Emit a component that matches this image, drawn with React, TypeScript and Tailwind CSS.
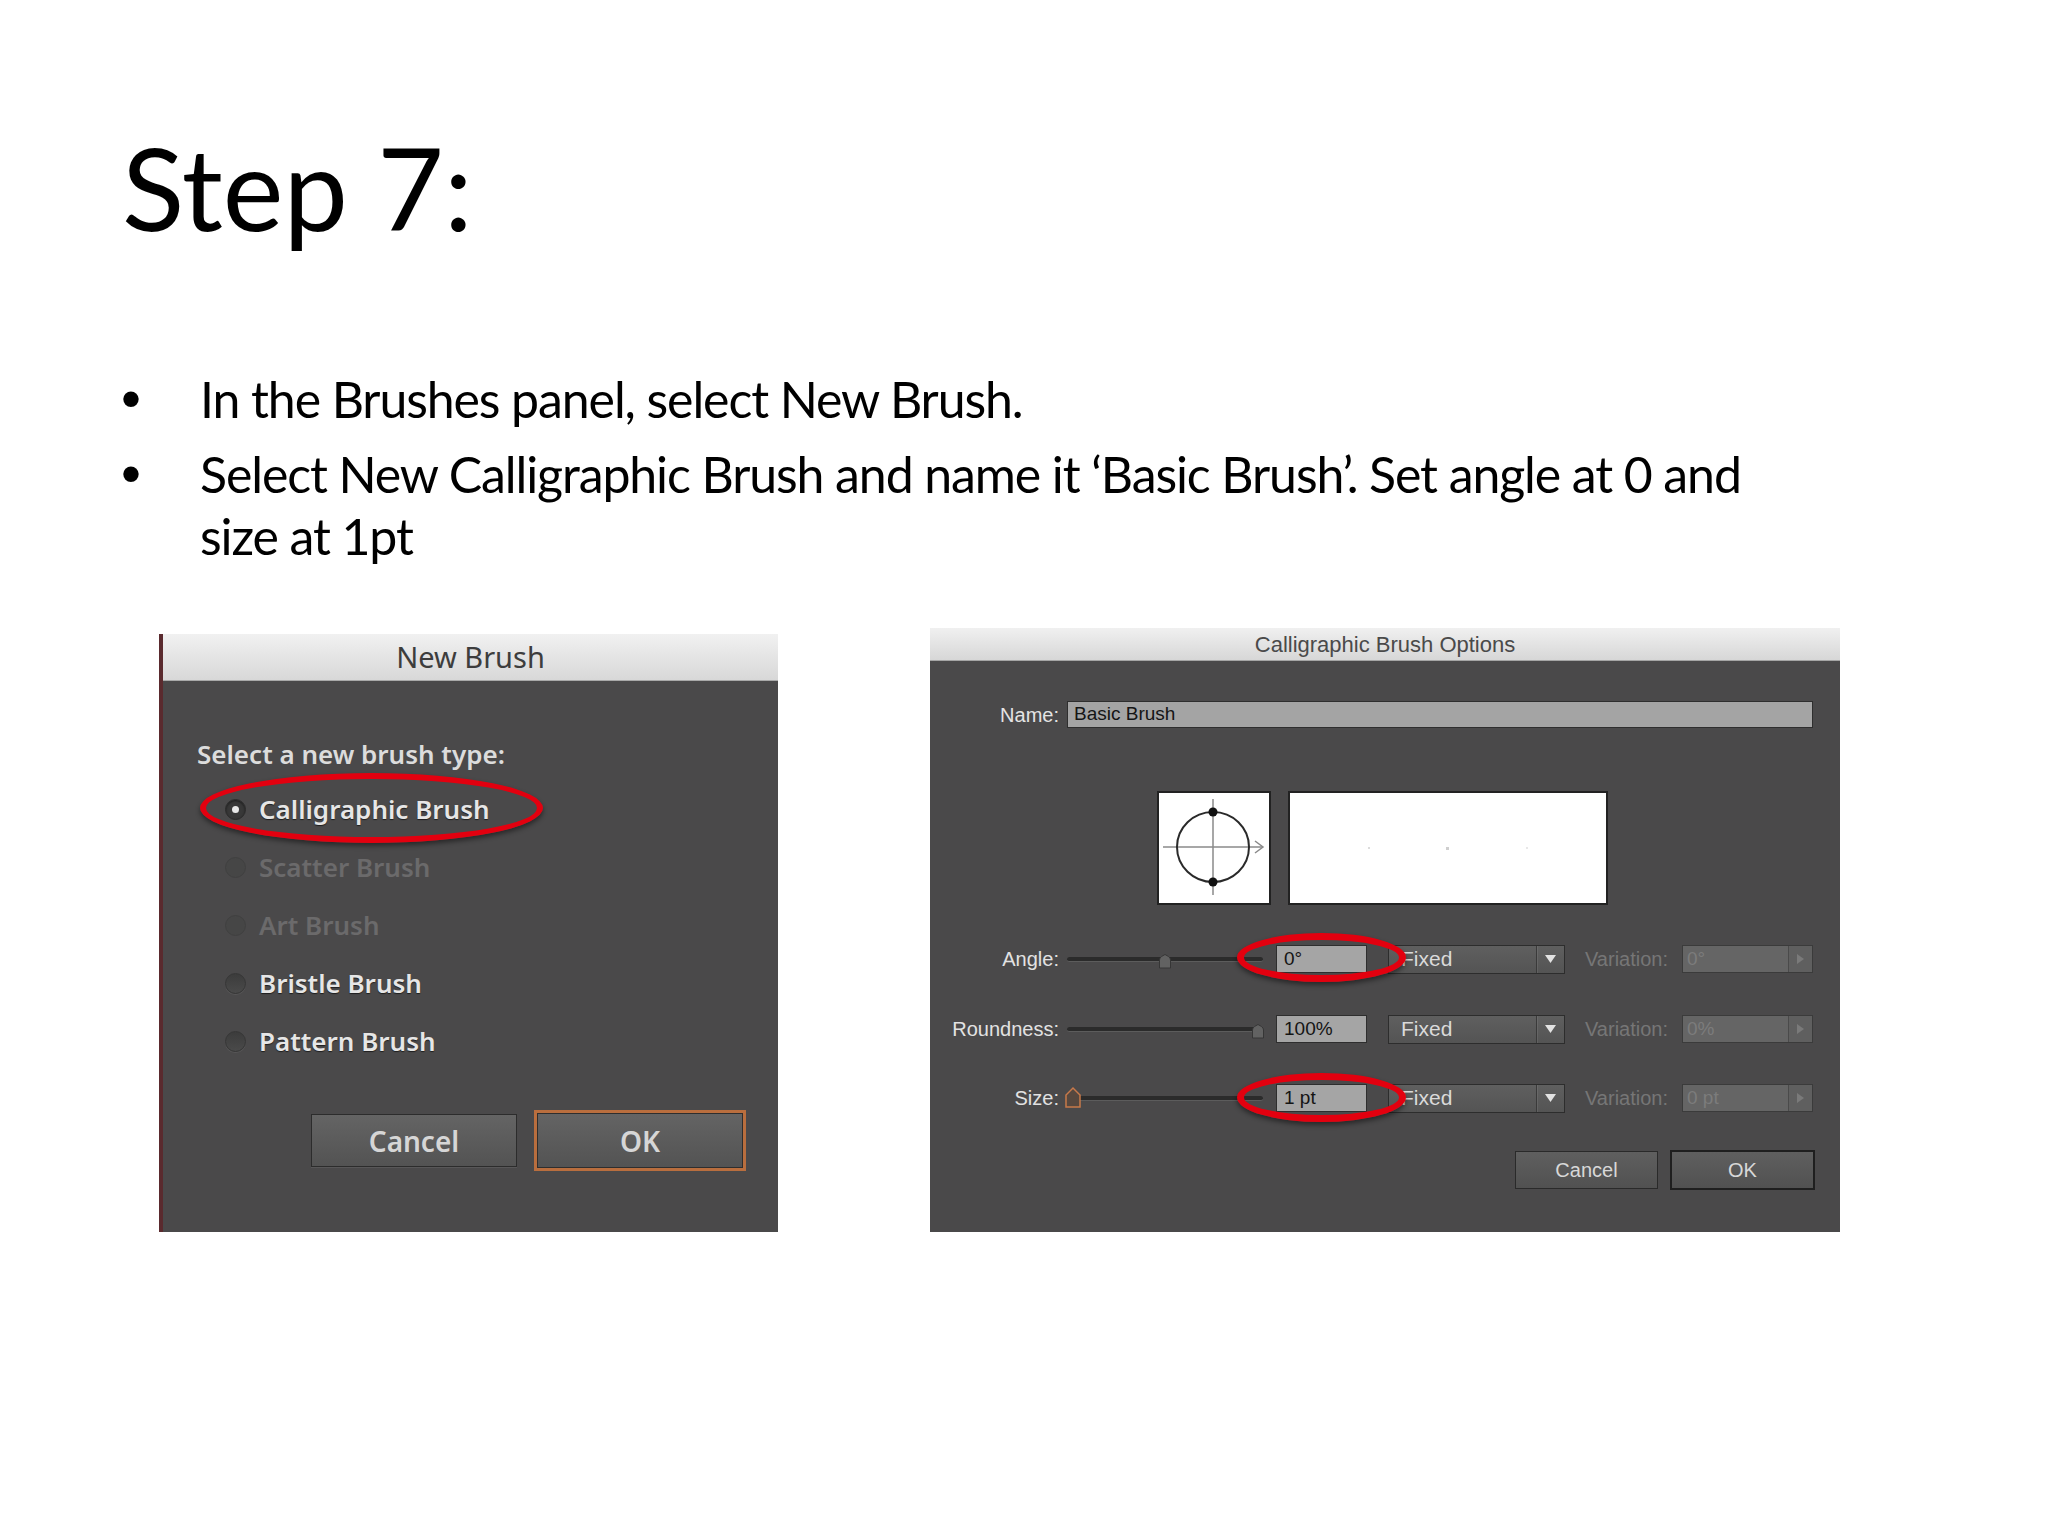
import React from 'react';

const slideFont = "font-['Lato',sans-serif]";
const macFont = "font-['Noto_Sans',sans-serif]";
const aiFont = "font-['Liberation_Sans',sans-serif]";

type RadioState = 'selected' | 'normal' | 'disabled';

const BRUSH_TYPES: { label: string; state: RadioState }[] = [
  { label: 'Calligraphic Brush', state: 'selected' },
  { label: 'Scatter Brush', state: 'disabled' },
  { label: 'Art Brush', state: 'disabled' },
  { label: 'Bristle Brush', state: 'normal' },
  { label: 'Pattern Brush', state: 'normal' },
];

function RedRing({ className }: { className: string }) {
  return (
    <div
      className={`pointer-events-none absolute rounded-[50%] border-[#e3000f] shadow-[0_3px_5px_rgba(0,0,0,0.45)] ${className}`}
    />
  );
}

function Radio({ state }: { state: RadioState }) {
  if (state === 'selected') {
    return (
      <span className="flex h-[21px] w-[21px] items-center justify-center rounded-full border border-[#2b2b2b] bg-[#383838] shadow-[inset_0_1px_2px_rgba(0,0,0,0.5)]">
        <span className="h-[7px] w-[7px] rounded-full bg-[#e8e8e8]" />
      </span>
    );
  }
  if (state === 'normal') {
    return (
      <span className="h-[21px] w-[21px] rounded-full border border-[#363636] bg-gradient-to-b from-[#3c3c3c] to-[#4a4a4a] shadow-[0_1px_0_rgba(255,255,255,0.08)]" />
    );
  }
  return <span className="h-[21px] w-[21px] rounded-full border border-[#404040] bg-[#464646]" />;
}

function NewBrushDialog() {
  return (
    <div className={`relative flex h-[598px] w-[619px] flex-col border-l-[4px] border-l-[#5a2a2e] bg-[#4a494a] ${macFont}`}>
      {/* title bar */}
      <div className="flex h-[47px] items-center justify-center border-b border-[#a9a9a9] bg-gradient-to-b from-[#f1f1f1] to-[#d8d8d8] text-[29px] text-[#3d3d3d]">
        New Brush
      </div>

      <div className="flex flex-1 flex-col pl-[34px] pt-[56px]">
        <div className="h-[34px] text-[26px] font-semibold leading-[34px] text-[#dcdcdc]">
          Select a new brush type:
        </div>

        <div className="mt-[9px] flex flex-col pl-[28px]">
          {BRUSH_TYPES.map((b) => (
            <div key={b.label} className="flex h-[58px] items-center gap-[13px]">
              <Radio state={b.state} />
              <span
                className={
                  b.state === 'disabled'
                    ? 'text-[26px] font-semibold text-[#6b6a6b]'
                    : 'text-[26px] font-semibold text-[#e6e6e6] [text-shadow:0_1px_1px_rgba(0,0,0,0.6)]'
                }
              >
                {b.label}
              </span>
            </div>
          ))}
        </div>

        <div className="mt-[40px] flex items-center justify-end gap-[17px] pr-[32px]">
          <button className="h-[53px] w-[206px] border border-[#2c2c2c] bg-gradient-to-b from-[#646464] to-[#535353] text-[28px] font-semibold text-[#d6d6d6] shadow-[0_1px_0_rgba(255,255,255,0.08)]">
            Cancel
          </button>
          <button className="h-[61px] w-[212px] border-[3px] border-[#b96e3e] bg-gradient-to-b from-[#646464] to-[#535353] text-[28px] font-semibold text-[#d6d6d6] shadow-[inset_0_0_0_1px_#2e2e2e]">
            OK
          </button>
        </div>
      </div>

      <RedRing className="left-[37px] top-[139px] h-[70px] w-[343px] border-[6px]" />
    </div>
  );
}

function Thumb({ kind }: { kind: 'plain' | 'size' }) {
  if (kind === 'size') {
    return (
      <svg width="18" height="22" viewBox="0 0 18 22">
        <path d="M2 21 V9 L9 2 L16 9 V21 Z" fill="#56483f" stroke="#c8794a" strokeWidth="1.5" />
      </svg>
    );
  }
  return (
    <svg width="14" height="16" viewBox="0 0 14 16">
      <path d="M1.5 15 V7 Q1.5 5 3.5 3.5 L7 1.5 L10.5 3.5 Q12.5 5 12.5 7 V15 Z" fill="#626262" stroke="#363636" />
    </svg>
  );
}

function DownArrow() {
  return (
    <svg width="11" height="8" viewBox="0 0 11 8">
      <polygon points="0,0 11,0 5.5,8" fill="#e2e2e2" />
    </svg>
  );
}

function OptionRow({
  label,
  value,
  variation,
  thumbLeft,
  thumbKind,
}: {
  label: string;
  value: string;
  variation: string;
  thumbLeft: number;
  thumbKind: 'plain' | 'size';
}) {
  return (
    <div className="flex h-[28px] items-center">
      <span className="w-[129px] text-right text-[20px] text-[#e2e2e2]">{label}</span>
      <div className="relative ml-[8px] flex h-[28px] w-[196px] items-center">
        <div className="h-[5px] w-full rounded-full border-b border-[#5c5c5c] bg-[#2b2b2b]" />
        <div className="absolute bottom-[4px]" style={{ left: thumbLeft }}>
          <Thumb kind={thumbKind} />
        </div>
      </div>
      <div className="ml-[13px] flex h-[28px] w-[91px] items-center border border-[#2e2e2e] bg-[#a5a5a5] pl-[7px] text-[19px] text-[#141414]">
        {value}
      </div>
      <div className="ml-[21px] flex h-[29px] w-[177px] items-center border border-[#2d2d2d] bg-gradient-to-b from-[#5f5f5f] to-[#545454]">
        <span className="flex-1 pl-[12px] text-[21px] text-[#dadada]">Fixed</span>
        <span className="flex h-full w-[28px] items-center justify-center border-l border-[#3a3a3a] shadow-[inset_1px_0_0_rgba(255,255,255,0.08)]">
          <DownArrow />
        </span>
      </div>
      <span className="ml-[20px] w-[88px] text-[20px] text-[#767676]">Variation:</span>
      <div className="ml-[9px] flex h-[28px] w-[131px] items-center border border-[#3b3b3b] bg-[#656565]">
        <span className="flex-1 pl-[4px] text-[19px] text-[#7c7c7c]">{variation}</span>
        <span className="flex h-full w-[24px] items-center justify-center border-l border-[#4a4a4a] bg-[#5f5f5f]">
          <svg width="7" height="10" viewBox="0 0 7 10">
            <polygon points="0,0 7,5 0,10" fill="#7a7a7a" />
          </svg>
        </span>
      </div>
    </div>
  );
}

function CalligraphicDialog() {
  return (
    <div className={`relative flex h-[604px] w-[910px] flex-col bg-[#4a494a] ${aiFont}`}>
      <div className="flex h-[33px] items-center justify-center border-b border-[#a5a5a5] bg-gradient-to-b from-[#f0f0f0] to-[#d7d7d7] text-[22px] text-[#4a4a4a]">
        Calligraphic Brush Options
      </div>

      {/* name */}
      <div className="mt-[40px] flex h-[27px] items-center">
        <span className="w-[129px] text-right text-[20px] text-[#e4e4e4]">Name:</span>
        <div className="ml-[8px] flex h-[27px] w-[746px] items-center border border-[#2e2e2e] bg-[#a4a4a4] pl-[6px] text-[19px] text-[#151515]">
          Basic Brush
        </div>
      </div>

      {/* preview */}
      <div className="mt-[63px] flex gap-[17px] pl-[227px]">
        <div className="h-[114px] w-[114px] border-2 border-[#222] bg-white">
          <svg width="110" height="110" viewBox="0 0 110 110">
            <line x1="54" y1="6" x2="54" y2="102" stroke="#8a8a8a" strokeWidth="1.5" />
            <line x1="4" y1="54" x2="104" y2="54" stroke="#8a8a8a" strokeWidth="1.5" />
            <polyline points="96,48 104,54 96,60" fill="none" stroke="#8a8a8a" strokeWidth="1.5" />
            <ellipse cx="54" cy="54" rx="36" ry="35" fill="none" stroke="#2a2a2a" strokeWidth="2" />
            <circle cx="54" cy="19" r="4.5" fill="#111" />
            <circle cx="54" cy="89" r="4.5" fill="#111" />
          </svg>
        </div>
        <div className="flex h-[114px] w-[320px] items-center justify-around border-2 border-[#222] bg-white px-[40px]">
          <span className="h-[2px] w-[2px] bg-[#dcdcdc]" />
          <span className="h-[3px] w-[3px] bg-[#cfcfcf]" />
          <span className="h-[2px] w-[2px] bg-[#e8e8e8]" />
        </div>
      </div>

      {/* options */}
      <div className="mt-[40px]">
        <OptionRow label="Angle:" value="0°" variation="0°" thumbLeft={91} thumbKind="plain" />
      </div>
      <div className="mt-[42px]">
        <OptionRow label="Roundness:" value="100%" variation="0%" thumbLeft={184} thumbKind="plain" />
      </div>
      <div className="mt-[41px]">
        <OptionRow label="Size:" value="1 pt" variation="0 pt" thumbLeft={-3} thumbKind="size" />
      </div>

      <div className="mt-[38px] flex items-center justify-end gap-[12px] pr-[25px]">
        <button className="h-[38px] w-[143px] border border-[#2a2a2a] bg-gradient-to-b from-[#5f5f5f] to-[#515151] text-[20px] text-[#d8d8d8]">
          Cancel
        </button>
        <button className="h-[40px] w-[145px] border-2 border-[#1f1f1f] bg-gradient-to-b from-[#5f5f5f] to-[#515151] text-[20px] text-[#d8d8d8]">
          OK
        </button>
      </div>

      <RedRing className="left-[307px] top-[305px] h-[49px] w-[169px] border-[7px]" />
      <RedRing className="left-[307px] top-[445px] h-[49px] w-[169px] border-[7px]" />
    </div>
  );
}

export default function App() {
  return (
    <div className="h-[1536px] w-[2048px] overflow-hidden bg-white">
      <h1 className={`pl-[122px] pt-[129px] text-[115px] leading-[115px] text-black ${slideFont}`}>Step 7:</h1>

      <ul className={`mt-[123px] text-[50px] leading-[62px] tracking-[-1.1px] text-black ${slideFont}`}>
        <li className="flex items-baseline pl-[121px]">
          <span className="w-[79px] font-['Liberation_Sans',sans-serif] text-[57px] tracking-normal">•</span>
          <span>In the Brushes panel, select New Brush.</span>
        </li>
        <li className="mt-[12px] flex items-baseline pl-[121px]">
          <span className="w-[79px] font-['Liberation_Sans',sans-serif] text-[57px] tracking-normal">•</span>
          <span>
            Select New Calligraphic Brush and name it ‘Basic Brush’. Set angle at 0 and
            <br />
            size at 1pt
          </span>
        </li>
      </ul>

      <div className="mt-[61px] flex items-end pl-[159px]">
        <NewBrushDialog />
        <div className="ml-[152px]">
          <CalligraphicDialog />
        </div>
      </div>
    </div>
  );
}
